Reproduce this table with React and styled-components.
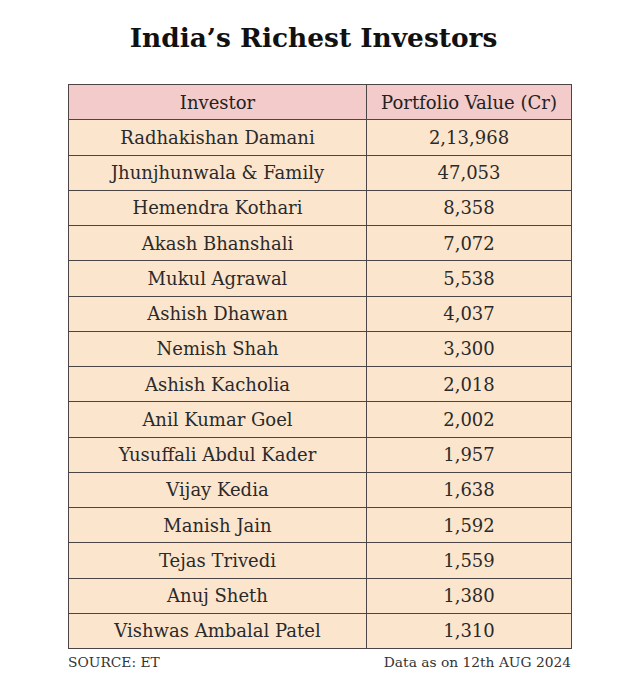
import React from "react"
import styled, { createGlobalStyle } from "styled-components"

const GlobalStyle = createGlobalStyle`
  body {
    margin: 0;
    background: #ffffff;
    font-family: "DejaVu Serif", "Liberation Serif", serif;
    color: #222;
  }
`

const Page = styled.div`
  width: 621px;
  padding-top: 18px;
  display: flex;
  flex-direction: column;
`

const Title = styled.h1`
  margin: 0 0 26px;
  padding-left: 6px;
  height: 40px;
  line-height: 40px;
  font-size: 26.4px;
  font-weight: bold;
  color: #111;
  text-align: center;
`

const Table = styled.table`
  width: 503px;
  margin-left: 68px;
  border-collapse: collapse;
  table-layout: fixed;
`

const Col = styled.col`
  width: ${({ w }) => w}px;
`

const HeadCell = styled.th`
  height: 34.25px;
  padding: 0;
  background: #f2cbca;
  border: 1px solid #4b4545;
  font-weight: normal;
  font-size: 18px;
  color: #222;
  text-align: center;
`

const Cell = styled.td`
  height: 34.25px;
  padding: 0;
  background: #fce5cd;
  border: 1px solid #4b4545;
  font-size: 18px;
  color: #2a2a2a;
  text-align: center;
`

const Footer = styled.div`
  width: 503px;
  margin-left: 68px;
  margin-top: 2px;
  display: flex;
  justify-content: space-between;
  font-size: 13.8px;
  color: #333;
  line-height: 22px;
`

const investors = [
  ["Radhakishan Damani", "2,13,968"],
  ["Jhunjhunwala & Family", "47,053"],
  ["Hemendra Kothari", "8,358"],
  ["Akash Bhanshali", "7,072"],
  ["Mukul Agrawal", "5,538"],
  ["Ashish Dhawan", "4,037"],
  ["Nemish Shah", "3,300"],
  ["Ashish Kacholia", "2,018"],
  ["Anil Kumar Goel", "2,002"],
  ["Yusuffali Abdul Kader", "1,957"],
  ["Vijay Kedia", "1,638"],
  ["Manish Jain", "1,592"],
  ["Tejas Trivedi", "1,559"],
  ["Anuj Sheth", "1,380"],
  ["Vishwas Ambalal Patel", "1,310"],
]

export default function App() {
  return (
    <Page>
      <GlobalStyle />
      <Title>India’s Richest Investors</Title>
      <Table>
        <colgroup>
          <Col w={298} />
          <Col w={205} />
        </colgroup>
        <thead>
          <tr>
            <HeadCell>Investor</HeadCell>
            <HeadCell>Portfolio Value (Cr)</HeadCell>
          </tr>
        </thead>
        <tbody>
          {investors.map(([name, value]) => (
            <tr key={name}>
              <Cell>{name}</Cell>
              <Cell>{value}</Cell>
            </tr>
          ))}
        </tbody>
      </Table>
      <Footer>
        <span>SOURCE: ET</span>
        <span>Data as on 12th AUG 2024</span>
      </Footer>
    </Page>
  )
}
